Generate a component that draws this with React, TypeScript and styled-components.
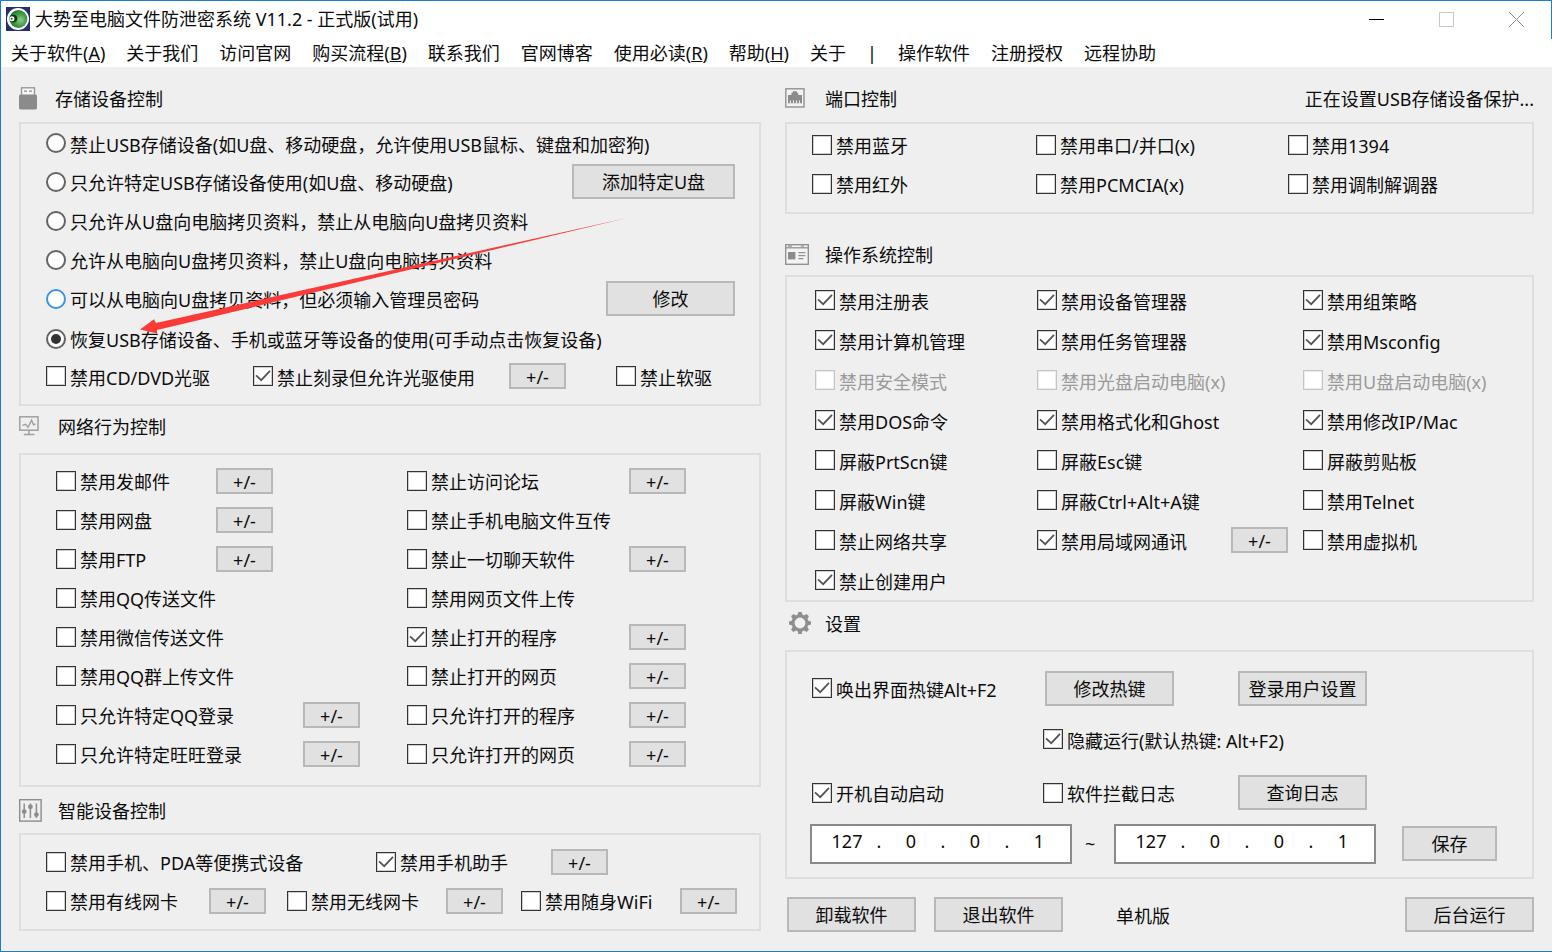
import React from "react";
import styled, { createGlobalStyle } from "styled-components";

const GlobalStyle = createGlobalStyle`
  *, *::before, *::after { box-sizing: border-box; }
  body {
    margin: 0;
    background: #efefef;
    color: #0c0c0c;
    font-family: "Noto Sans", "Noto Sans CJK SC", sans-serif;
    font-size: 18px;
    line-height: 24px;
  }
  button, input { font: inherit; color: inherit; }
`;

const Window = styled.div`
  min-height: 100vh;
  display: flex;
  flex-direction: column;
  background: #efefef;
  border: 1px solid #1a7fd4;
  border-right: 0;
`;

const TitleBar = styled.header`
  display: flex;
  align-items: center;
  height: 38px;
  padding: 0 0 2px 5px;
  background: #fff;
  border-right: 1px solid #1a7fd4;
`;

const Title = styled.h1`
  margin: 0 auto 0 5px;
  font-size: 18px;
  font-weight: 400;
  white-space: nowrap;
`;

const WindowButton = styled.button`
  display: flex;
  align-items: center;
  justify-content: center;
  width: 70px;
  height: 36px;
  padding: 0;
  border: 0;
  background: none;
`;

const MenuBar = styled.nav`
  display: flex;
  align-items: center;
  gap: 21px;
  height: 28px;
  padding-left: 10px;
  background: #fff;
  white-space: nowrap;
`;

const MenuLink = styled.a`
  color: inherit;
  text-decoration: none;
`;

const Body = styled.main`
  flex: 1;
  display: grid;
  grid-template-columns: minmax(0, 742fr) minmax(0, 749fr);
  gap: 24px;
  padding: 0 18px 19px;
`;

const Column = styled.div`
  display: flex;
  flex-direction: column;
`;

const Heading = styled.div<{ $top: number; $bottom: number }>`
  display: flex;
  align-items: center;
  height: ${(p) => p.$top + p.$bottom + 24}px;
  padding: ${(p) => p.$top}px 0 ${(p) => p.$bottom}px;
`;

const IconSlot = styled.span<{ $width: number }>`
  display: flex;
  width: ${(p) => p.$width}px;
  padding-bottom: 2px;
`;

const HeadingText = styled.h2`
  margin: 0;
  font-size: 18px;
  font-weight: 400;
`;

const Status = styled.span`
  margin-left: auto;
  white-space: nowrap;
`;

const Panel = styled.section<{ $pad: string }>`
  position: relative;
  border: 2px solid #dedede;
  padding: ${(p) => p.$pad};
`;

const Row = styled.div<{ $cols: string; $height?: number }>`
  display: grid;
  grid-template-columns: ${(p) => p.$cols};
  align-items: center;
  height: ${(p) => p.$height ?? 39}px;
`;

const Label = styled.label<{ $disabled?: boolean }>`
  display: inline-flex;
  align-items: center;
  gap: 4px;
  white-space: nowrap;
  color: ${(p) => (p.$disabled ? "#9a9a9a" : "inherit")};
`;

const LabelText = styled.span`
  padding-top: 3px;
`;

const BoxWrap = styled.span`
  display: grid;
  width: 20px;
  height: 20px;
  > * { grid-area: 1 / 1; }
`;

const CheckInput = styled.input`
  appearance: none;
  width: 20px;
  height: 20px;
  margin: 0;
  background: #fff;
  border: 1px solid #333;
  outline: 1px solid #cfcfcf;
  outline-offset: -2px;
  &:disabled { border-color: #c4c4c4; outline-color: #ececec; }
`;

const RadioInput = styled.input<{ $hot?: boolean }>`
  appearance: none;
  display: grid;
  place-items: center;
  width: 20px;
  height: 20px;
  margin: 0;
  background: #fff;
  border: 2px solid ${(p) => (p.$hot ? "#3a96e0" : "#646464")};
  border-radius: 50%;
  &:checked::after {
    content: "";
    width: 10px;
    height: 10px;
    border-radius: 50%;
    background: #333;
  }
`;

const Tick = styled.svg`
  pointer-events: none;
  z-index: 1;
`;

const Button = styled.button<{ $width: number; $small?: boolean }>`
  width: ${(p) => p.$width}px;
  height: ${(p) => (p.$small ? 26 : 35)}px;
  padding: ${(p) => (p.$small ? 2 : 1)}px 0 0;
  background: #e1e1e1;
  border: 2px solid #b8b8b8;
  line-height: ${(p) => (p.$small ? 20 : 24)}px;
  white-space: nowrap;
`;

const Address = styled.div`
  display: flex;
  width: 262px;
  height: 40px;
  padding: 0 0 6px 7px;
  background: #fff;
  border: 2px solid #8a8a8a;
`;

const Octet = styled.input`
  width: 56px;
  padding: 0;
  border: 0;
  background: none;
  text-align: center;
`;

const Dot = styled.span`
  width: 8px;
  line-height: 30px;
  text-align: center;
`;

const Tilde = styled.span`
  padding-left: 13px;
`;

const Footer = styled.footer`
  display: flex;
  align-items: center;
  gap: 18px;
  margin-top: 18px;
  padding-left: 2px;
`;

const Edition = styled.span`
  margin: 2px auto 0 35px;
`;

const Arrow = styled.svg`
  position: absolute;
  left: 119px;
  top: 92px;
  pointer-events: none;
`;

type CheckProps = { text: string; on?: boolean; disabled?: boolean };

function Check({ text, on, disabled }: CheckProps) {
  return (
    <Label $disabled={disabled}>
      <BoxWrap>
        <CheckInput type="checkbox" defaultChecked={on} disabled={disabled} />
        {on && (
          <Tick width="20" height="20" viewBox="0 0 20 20" fill="none" stroke="#555" strokeWidth="1.8">
            <path d="M3 9.3 8.2 14.2 17 4.8" />
          </Tick>
        )}
      </BoxWrap>
      <LabelText>{text}</LabelText>
    </Label>
  );
}

function Radio({ text, on, hot }: { text: string; on?: boolean; hot?: boolean }) {
  return (
    <Label>
      <RadioInput type="radio" name="storage" defaultChecked={on} $hot={hot} />
      <LabelText>{text}</LabelText>
    </Label>
  );
}

function Edit({ of }: { of: string }) {
  return (
    <Button type="button" $small $width={57} aria-label={`${of} +/-`}>
      +/-
    </Button>
  );
}

function IpAddress({ name }: { name: string }) {
  return (
    <Address role="group" aria-label={name}>
      {["127", "0", "0", "1"].map((v, i) => (
        <React.Fragment key={i}>
          {i > 0 && <Dot>.</Dot>}
          <Octet defaultValue={v} aria-label={`${name} ${i + 1}`} />
        </React.Fragment>
      ))}
    </Address>
  );
}

const AppLogo = () => (
  <svg width="24" height="24" viewBox="0 0 24 24">
    <defs>
      <radialGradient id="ball" cx="0.62" cy="0.55" r="0.6">
        <stop offset="0" stopColor="#8fcf8a" />
        <stop offset="0.5" stopColor="#4aa04c" />
        <stop offset="1" stopColor="#1d7a2a" />
      </radialGradient>
    </defs>
    <rect width="24" height="24" fill="#262c6c" />
    <circle cx="12" cy="12" r="11" fill="#fff" />
    <circle cx="12.4" cy="12" r="9" fill="url(#ball)" />
    <circle cx="7.4" cy="11.6" r="3.8" fill="#0d3512" />
    <circle cx="6" cy="11.8" r="2.5" fill="#fff" />
    <circle cx="5.6" cy="11.8" r="1" fill="#26402a" />
  </svg>
);

const UsbIcon = () => (
  <svg width="18" height="23" viewBox="0 0 18 23">
    <rect x="2.5" y="0.8" width="13" height="8" fill="#f6f6f6" stroke="#9a9a9a" strokeWidth="1.4" />
    <path d="M5 4.2h3M10 4.2h3" stroke="#8b8b8b" strokeWidth="1.3" />
    <rect y="7.6" width="18" height="15" rx="1.6" fill="#8b8b8b" />
  </svg>
);

const MonitorIcon = () => (
  <svg width="20" height="20" viewBox="0 0 20 20" fill="none" stroke="#a0a0a0" strokeWidth="1.5">
    <rect x="0.8" y="0.8" width="18.2" height="13.4" />
    <path d="M3.4 9.4 6.6 8.4 9 11.2 12.6 4.2 14.6 8.8 16.4 8" strokeWidth="1.4" />
    <path d="M10 14.2v4M4.8 18.6h10.6" />
  </svg>
);

const SlidersIcon = () => (
  <svg width="23" height="23" viewBox="0 0 23 23" fill="none" stroke="#8d8d8d">
    <rect x="0.7" y="0.7" width="21.4" height="21.4" strokeWidth="1.4" />
    <path d="M5.2 4.5v14.5M11.4 4.5v14.5M17.4 4.5v14.5" strokeWidth="1.5" />
    <g fill="#8d8d8d" stroke="none">
      <circle cx="5.2" cy="12.6" r="2.4" />
      <circle cx="11.4" cy="7.8" r="2.4" />
      <circle cx="17.4" cy="15.6" r="2.4" />
    </g>
  </svg>
);

const PortIcon = () => (
  <svg width="20" height="20" viewBox="0 0 20 20">
    <rect x="0.8" y="0.8" width="18.2" height="18.2" fill="#f2f2f2" stroke="#929292" strokeWidth="1.4" />
    <path d="M3 7h3.4V4.8h1.4V3.2h4v1.6h1.4V7H17v8.2H3z" fill="#8b8b8b" />
    <path d="M5.4 15.4v-3M8.4 15.4v-3M11.4 15.4v-3M14.4 15.4v-3" stroke="#f2f2f2" strokeWidth="1" />
  </svg>
);

const WindowIcon = () => (
  <svg width="24" height="21" viewBox="0 0 24 21" fill="none" stroke="#929292">
    <rect x="0.7" y="0.7" width="22.6" height="19.6" strokeWidth="1.4" fill="#f3f3f3" />
    <path d="M0.7 3.8h22.6" strokeWidth="1.3" />
    <path d="M3 2.2h4M16 2.2h3" strokeWidth="1.2" />
    <rect x="3" y="8" width="7.4" height="7.4" fill="#8b8b8b" stroke="none" />
    <path d="M13.4 8.6h7M13.4 11.6h7M13.4 14.6h5" strokeWidth="1.3" />
  </svg>
);

const GearIcon = () => (
  <svg width="28" height="24" viewBox="-3 0 28 24">
    <g fill="#8f8f8f">
      {[0, 45, 90, 135, 180, 225, 270, 315].map((a) => (
        <path key={a} d="M9.2 5 10.4 1h3.2l1.2 4z" transform={`rotate(${a} 12 12)`} />
      ))}
    </g>
    <circle cx="12" cy="12" r="6.9" fill="#f1f1f1" stroke="#8f8f8f" strokeWidth="3" />
  </svg>
);

const menu: [string, string?][] = [
  ["关于软件", "A"],
  ["关于我们"],
  ["访问官网"],
  ["购买流程", "B"],
  ["联系我们"],
  ["官网博客"],
  ["使用必读", "R"],
  ["帮助", "H"],
  ["关于"],
  ["|"],
  ["操作软件"],
  ["注册授权"],
  ["远程协助"],
];

type NetItem = CheckProps & { edit?: boolean };

const network: [NetItem, NetItem][] = [
  [{ text: "禁用发邮件", edit: true }, { text: "禁止访问论坛", edit: true }],
  [{ text: "禁用网盘", edit: true }, { text: "禁止手机电脑文件互传" }],
  [{ text: "禁用FTP", edit: true }, { text: "禁止一切聊天软件", edit: true }],
  [{ text: "禁用QQ传送文件" }, { text: "禁用网页文件上传" }],
  [{ text: "禁用微信传送文件" }, { text: "禁止打开的程序", on: true, edit: true }],
  [{ text: "禁用QQ群上传文件" }, { text: "禁止打开的网页", edit: true }],
  [{ text: "只允许特定QQ登录", edit: true }, { text: "只允许打开的程序", edit: true }],
  [{ text: "只允许特定旺旺登录", edit: true }, { text: "只允许打开的网页", edit: true }],
];

const ports = [
  ["禁用蓝牙", "禁用串口/并口(x)", "禁用1394"],
  ["禁用红外", "禁用PCMCIA(x)", "禁用调制解调器"],
];

const system: CheckProps[][] = [
  [{ text: "禁用注册表", on: true }, { text: "禁用设备管理器", on: true }, { text: "禁用组策略", on: true }],
  [{ text: "禁用计算机管理", on: true }, { text: "禁用任务管理器", on: true }, { text: "禁用Msconfig", on: true }],
  [
    { text: "禁用安全模式", disabled: true },
    { text: "禁用光盘启动电脑(x)", disabled: true },
    { text: "禁用U盘启动电脑(x)", disabled: true },
  ],
  [{ text: "禁用DOS命令", on: true }, { text: "禁用格式化和Ghost", on: true }, { text: "禁用修改IP/Mac", on: true }],
  [{ text: "屏蔽PrtScn键" }, { text: "屏蔽Esc键" }, { text: "屏蔽剪贴板" }],
  [{ text: "屏蔽Win键" }, { text: "屏蔽Ctrl+Alt+A键" }, { text: "禁用Telnet" }],
];

export default function App() {
  return (
    <Window>
      <GlobalStyle />
      <TitleBar>
        <AppLogo />
        <Title>大势至电脑文件防泄密系统 V11.2 - 正式版(试用)</Title>
        <WindowButton type="button" aria-label="最小化">
          <svg width="15" height="15" stroke="#000"><path d="M0 7.5h15" /></svg>
        </WindowButton>
        <WindowButton type="button" aria-label="最大化">
          <svg width="15" height="15" fill="none" stroke="#c8c8c8"><rect x="0.5" y="0.5" width="14" height="14" /></svg>
        </WindowButton>
        <WindowButton type="button" aria-label="关闭">
          <svg width="15" height="15" stroke="#8e8e8e"><path d="M0 0l15 15M15 0 0 15" /></svg>
        </WindowButton>
      </TitleBar>
      <MenuBar>
        {menu.map(([text, key]) =>
          text === "|" ? (
            <span key={text}>|</span>
          ) : (
            <MenuLink href="#" key={text}>
              {text}
              {key && (<>(<u>{key}</u>)</>)}
            </MenuLink>
          )
        )}
      </MenuBar>
      <Body>
        <Column>
          <Heading $top={20} $bottom={11}>
            <IconSlot $width={36}><UsbIcon /></IconSlot>
            <HeadingText>存储设备控制</HeadingText>
          </Heading>
          <Panel $pad="0 24px 7px 25px">
            <Row $cols="1fr" $height={38}>
              <Radio text="禁止USB存储设备(如U盘、移动硬盘，允许使用USB鼠标、键盘和加密狗)" />
            </Row>
            <Row $cols="1fr auto">
              <Radio text="只允许特定USB存储设备使用(如U盘、移动硬盘)" />
              <Button type="button" $width={163}>添加特定U盘</Button>
            </Row>
            <Row $cols="1fr"><Radio text="只允许从U盘向电脑拷贝资料，禁止从电脑向U盘拷贝资料" /></Row>
            <Row $cols="1fr"><Radio text="允许从电脑向U盘拷贝资料，禁止U盘向电脑拷贝资料" /></Row>
            <Row $cols="1fr auto">
              <Radio hot text="可以从电脑向U盘拷贝资料，但必须输入管理员密码" />
              <Button type="button" $width={129}>修改</Button>
            </Row>
            <Row $cols="1fr" $height={41}>
              <Radio on text="恢复USB存储设备、手机或蓝牙等设备的使用(可手动点击恢复设备)" />
            </Row>
            <Row $cols="207px 256px 107px 1fr" $height={34}>
              <Check text="禁用CD/DVD光驱" />
              <Check on text="禁止刻录但允许光驱使用" />
              <Edit of="禁止刻录" />
              <Check text="禁止软驱" />
            </Row>
            <Row $cols="1fr" $height={4} />
            <Arrow width="492" height="120" viewBox="0 0 492 120" aria-hidden="true">
              <path d="M0 113.5 14 103.2 16 107 489 1.4 17 114 17 117.4z" fill="#fb3b38" />
            </Arrow>
          </Panel>

          <Heading $top={9} $bottom={14}>
            <IconSlot $width={39}><MonitorIcon /></IconSlot>
            <HeadingText>网络行为控制</HeadingText>
          </Heading>
          <Panel $pad="6px 24px 12px 35px">
            {network.map(([a, b], i) => (
              <Row key={a.text} $cols={i < 6 ? "160px 191px 222px 1fr" : "247px 104px 222px 1fr"}>
                <Check text={a.text} />
                {a.edit ? <Edit of={a.text} /> : <span />}
                <Check text={b.text} on={b.on} />
                {b.edit && <Edit of={b.text} />}
              </Row>
            ))}
          </Panel>

          <Heading $top={12} $bottom={10}>
            <IconSlot $width={39}><SlidersIcon /></IconSlot>
            <HeadingText>智能设备控制</HeadingText>
          </Heading>
          <Panel $pad="7px 0 9px 25px">
            <Row $cols="330px 175px 1fr">
              <Check text="禁用手机、PDA等便携式设备" />
              <Check on text="禁用手机助手" />
              <Edit of="禁用手机助手" />
            </Row>
            <Row $cols="163px 78px 159px 75px 159px 1fr">
              <Check text="禁用有线网卡" />
              <Edit of="禁用有线网卡" />
              <Check text="禁用无线网卡" />
              <Edit of="禁用无线网卡" />
              <Check text="禁用随身WiFi" />
              <Edit of="禁用随身WiFi" />
            </Row>
          </Panel>
        </Column>

        <Column>
          <Heading $top={20} $bottom={11}>
            <IconSlot $width={40}><PortIcon /></IconSlot>
            <HeadingText>端口控制</HeadingText>
            <Status>正在设置USB存储设备保护...</Status>
          </Heading>
          <Panel $pad="1px 0 9px 25px">
            {ports.map((row) => (
              <Row key={row[0]} $cols="224px 252px 1fr">
                {row.map((text) => <Check key={text} text={text} />)}
              </Row>
            ))}
          </Panel>

          <Heading $top={29} $bottom={8}>
            <IconSlot $width={40}><WindowIcon /></IconSlot>
            <HeadingText>操作系统控制</HeadingText>
          </Heading>
          <Panel $pad="3px 0 0 28px">
            {system.map((row) => (
              <Row key={row[0].text} $cols="222px 266px 1fr" $height={40}>
                {row.map((c) => <Check key={c.text} {...c} />)}
              </Row>
            ))}
            <Row $cols="222px 194px 72px 1fr" $height={40}>
              <Check text="禁止网络共享" />
              <Check on text="禁用局域网通讯" />
              <Edit of="禁用局域网通讯" />
              <Check text="禁用虚拟机" />
            </Row>
            <Row $cols="1fr" $height={40}><Check on text="禁止创建用户" /></Row>
          </Panel>

          <Heading $top={10} $bottom={14}>
            <IconSlot $width={40}><GearIcon /></IconSlot>
            <HeadingText>设置</HeadingText>
          </Heading>
          <Panel $pad="10px 0 11px 23px">
            <Row $cols="2px 233px 193px 1fr" $height={52}>
              <span />
              <Check on text="唤出界面热键Alt+F2" />
              <Button type="button" $width={129}>修改热键</Button>
              <Button type="button" $width={129}>登录用户设置</Button>
            </Row>
            <Row $cols="233px 1fr" $height={50}>
              <span />
              <Check on text="隐藏运行(默认热键: Alt+F2)" />
            </Row>
            <Row $cols="2px 231px 195px 1fr" $height={57}>
              <span />
              <Check on text="开机自动启动" />
              <Check text="软件拦截日志" />
              <Button type="button" $width={129}>查询日志</Button>
            </Row>
            <Row $cols="262px 42px 288px 1fr" $height={45}>
              <IpAddress name="起始地址" />
              <Tilde>~</Tilde>
              <IpAddress name="结束地址" />
              <Button type="button" $width={95}>保存</Button>
            </Row>
          </Panel>
          <Footer>
            <Button type="button" $width={129}>卸载软件</Button>
            <Button type="button" $width={129}>退出软件</Button>
            <Edition>单机版</Edition>
            <Button type="button" $width={129}>后台运行</Button>
          </Footer>
        </Column>
      </Body>
    </Window>
  );
}
